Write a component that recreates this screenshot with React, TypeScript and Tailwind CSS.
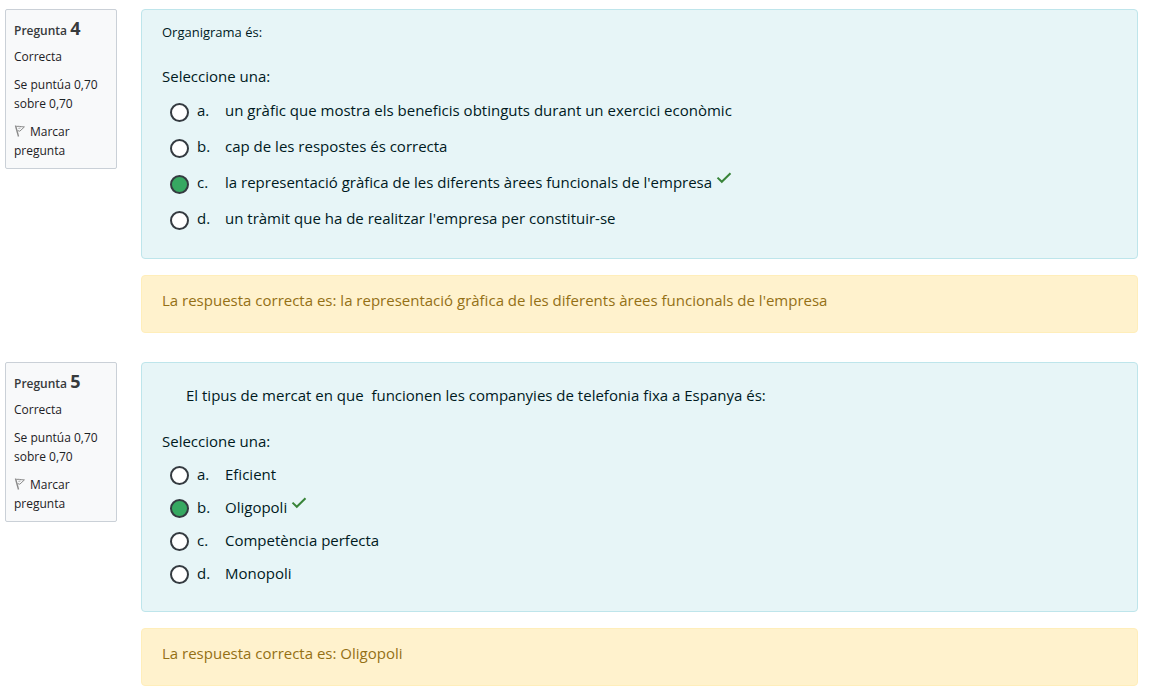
import type { ReactNode } from 'react';

type Answer = { letter: string; text: string };

type QuestionData = {
  number: number;
  answers: Answer[];
  chosen: string;
  rowClass: string;
  feedback: string;
  prompt: ReactNode;
};

const questions: QuestionData[] = [
  {
    number: 4,
    prompt: <p className="text-[13px] leading-5">Organigrama és:</p>,
    answers: [
      { letter: 'a', text: 'un gràfic que mostra els beneficis obtinguts durant un exercici econòmic' },
      { letter: 'b', text: 'cap de les respostes és correcta' },
      { letter: 'c', text: "la representació gràfica de les diferents àrees funcionals de l'empresa" },
      { letter: 'd', text: "un tràmit que ha de realitzar l'empresa per constituir-se" },
    ],
    chosen: 'c',
    rowClass: 'h-9',
    feedback: "La respuesta correcta es: la representació gràfica de les diferents àrees funcionals de l'empresa",
  },
  {
    number: 5,
    prompt: (
      <p className="pt-2 pl-6">
        El tipus de mercat en que&nbsp; funcionen les companyies de telefonia fixa a Espanya és:
      </p>
    ),
    answers: [
      { letter: 'a', text: 'Eficient' },
      { letter: 'b', text: 'Oligopoli' },
      { letter: 'c', text: 'Competència perfecta' },
      { letter: 'd', text: 'Monopoli' },
    ],
    chosen: 'b',
    rowClass: 'h-[33px]',
    feedback: 'La respuesta correcta es: Oligopoli',
  },
];

function FlagIcon() {
  return (
    <svg width="12" height="12" viewBox="0 0 12 12" fill="none" stroke="#8a8a8a" className="mr-1 inline-block align-[-1px]" aria-hidden="true">
      <path d="M1.5 0.5L4.5 11.5" strokeWidth="1.4" />
      <path d="M2.4 1.5C4.4 0.8 6.8 1.9 10.4 1.9L5.8 6.2L3.6 5.6" strokeWidth="1" />
      <path d="M4.4 3.4L6.6 3" strokeWidth="0.7" />
    </svg>
  );
}

function CheckIcon() {
  return (
    <svg width="16" height="12" viewBox="0 0 16 12" fill="none" stroke="#398439" strokeWidth="2" className="mb-2 ml-1 shrink-0" role="img" aria-label="Correcta">
      <path d="M1.5 5.6L5.8 9.8L14.5 1.2" />
    </svg>
  );
}

function InfoCard({ number }: { number: number }) {
  return (
    <aside className="flex w-28 shrink-0 flex-col gap-[9px] rounded-xs border border-[#cad0d7] bg-[#f8f9fa] px-2 py-2 text-[12px] leading-[19px]">
      <h3 className="h-5 leading-[21px] font-semibold text-[#373a3c]">
        Pregunta <span className="text-[18px] font-bold">{number}</span>
      </h3>
      <p>Correcta</p>
      <p>Se puntúa 0,70 sobre 0,70</p>
      <a href="#marcar">
        <FlagIcon />
        Marcar pregunta
      </a>
    </aside>
  );
}

function Question({ q }: { q: QuestionData }) {
  return (
    <section className="flex items-start gap-6">
      <InfoCard number={q.number} />
      <div className="flex min-w-0 flex-1 flex-col gap-4 text-[15px] leading-6">
        <div className="rounded border border-[#bee5eb] bg-[#e7f5f7] px-5 pt-3 pb-[22px] text-[#001a1e]">
          {q.prompt}
          <fieldset className="mt-[22px]">
            <legend className="mb-1">Seleccione una:</legend>
            {q.answers.map((a) => {
              const id = `q${q.number}-${a.letter}`;
              return (
                <div key={a.letter} className={`flex items-center pl-2 ${q.rowClass}`}>
                  <input
                    type="radio"
                    id={id}
                    name={`q${q.number}`}
                    defaultChecked={a.letter === q.chosen}
                    className="mt-1 mr-2 size-[19px] shrink-0 appearance-none rounded-full border-2 border-[#343a40] bg-white checked:bg-[#36a861]"
                  />
                  <label htmlFor={id} className="flex">
                    <span className="w-7 shrink-0">{a.letter}.</span>
                    <span>{a.text}</span>
                  </label>
                  {a.letter === q.chosen && <CheckIcon />}
                </div>
              );
            })}
          </fieldset>
        </div>
        <div className="rounded border border-[#ffeeba] bg-[#fff2cd] px-5 pt-3 pb-5 text-[#947015]">{q.feedback}</div>
      </div>
    </section>
  );
}

export default function App() {
  return (
    <main className="flex flex-col gap-[29px] bg-white py-[9px] pr-[13px] pl-[5px] font-['Open_Sans','Noto_Sans',sans-serif] text-[#1d2125]">
      {questions.map((q) => (
        <Question key={q.number} q={q} />
      ))}
    </main>
  );
}
